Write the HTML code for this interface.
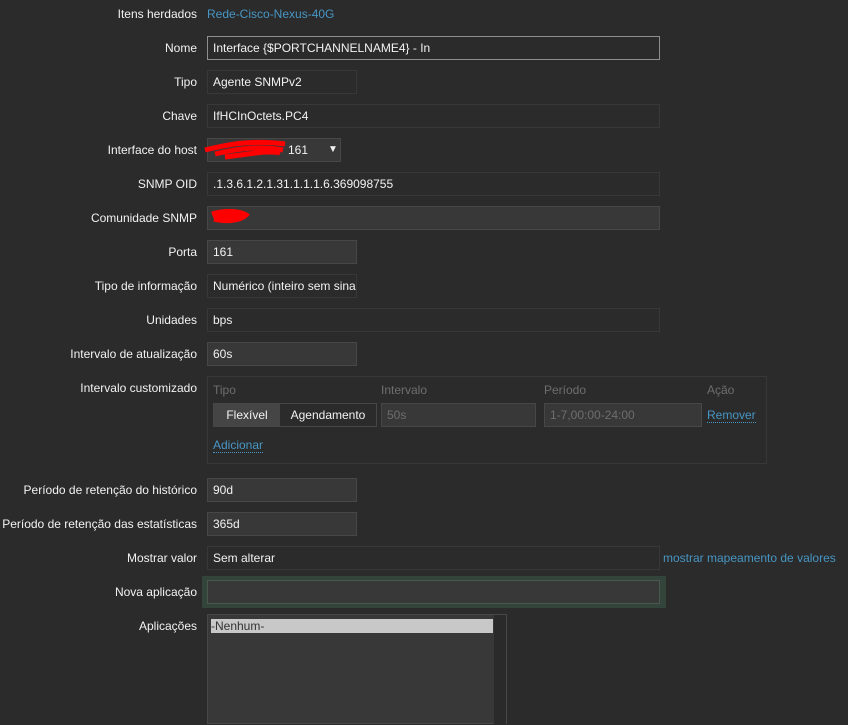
<!DOCTYPE html>
<html><head><meta charset="utf-8"><style>
body{margin:0;background:#2b2b2b;width:848px;height:717px;overflow:hidden;font-family:"Liberation Sans",Arial,sans-serif;font-size:12px;color:#f2f2f2;position:relative}
.l{position:absolute;right:651px;text-align:right;white-space:nowrap;line-height:14px}
.i{position:absolute;box-sizing:border-box;height:24px;border:1px solid #383838;background:#2b2b2b;padding:0 5px;line-height:22px;white-space:nowrap;overflow:hidden}
.e{background:#383838;border-color:#474747}
.a{color:#4796c4}
</style></head><body>
<div class="l" style="top:7px">Itens herdados</div><div class="a" style="position:absolute;left:207px;top:7px">Rede-Cisco-Nexus-40G</div>
<div class="l" style="top:41px">Nome</div><div class="i" style="left:207px;top:36px;width:453px;border-color:#8e8e8e">Interface {$PORTCHANNELNAME4} - In</div>
<div class="l" style="top:75px">Tipo</div><div class="i" style="left:207px;top:70px;width:150px">Agente SNMPv2</div>
<div class="l" style="top:109px">Chave</div><div class="i" style="left:207px;top:104px;width:453px">IfHCInOctets.PC4</div>
<div class="l" style="top:143px">Interface do host</div><div class="i e" style="left:207px;top:138px;width:134px"><span style="margin-left:75px">161</span><span style="position:absolute;left:120px;font-size:10px">▼</span></div>
<div class="l" style="top:177px">SNMP OID</div><div class="i" style="left:207px;top:172px;width:453px">.1.3.6.1.2.1.31.1.1.1.6.369098755</div>
<div class="l" style="top:211px">Comunidade SNMP</div><div class="i e" style="left:207px;top:206px;width:453px"></div>
<div class="l" style="top:245px">Porta</div><div class="i e" style="left:207px;top:240px;width:150px">161</div>
<div class="l" style="top:279px">Tipo de informação</div><div class="i" style="left:207px;top:274px;width:150px">Numérico (inteiro sem sinal)</div>
<div class="l" style="top:313px">Unidades</div><div class="i" style="left:207px;top:308px;width:453px">bps</div>
<div class="l" style="top:347px">Intervalo de atualização</div><div class="i e" style="left:207px;top:342px;width:150px">60s</div>
<div class="l" style="top:381px">Intervalo customizado</div>
<div style="position:absolute;left:207px;top:376px;width:560px;height:88px;box-sizing:border-box;border:1px solid #383838"></div>
<div style="position:absolute;top:383px;left:213px;color:#6e6e6e">Tipo</div>
<div style="position:absolute;top:383px;left:381px;color:#6e6e6e">Intervalo</div>
<div style="position:absolute;top:383px;left:544px;color:#6e6e6e">Período</div>
<div style="position:absolute;top:383px;left:707px;color:#6e6e6e">Ação</div>
<div class="i" style="left:213px;top:403px;width:164px;padding:0;border-color:#474747"><span style="display:inline-block;width:66px;background:#454545;text-align:center">Flexível</span><span style="display:inline-block;width:96px;text-align:center">Agendamento</span></div>
<div class="i e" style="left:381px;top:403px;width:155px;color:#6e6e6e">50s</div>
<div class="i e" style="left:544px;top:403px;width:158px;color:#6e6e6e">1-7,00:00-24:00</div>
<div class="a" style="position:absolute;left:707px;top:408px;border-bottom:1px dotted #4796c4">Remover</div>
<div class="a" style="position:absolute;left:213px;top:438px;border-bottom:1px dotted #4796c4">Adicionar</div>
<div class="l" style="top:483px">Período de retenção do histórico</div><div class="i e" style="left:207px;top:478px;width:150px">90d</div>
<div class="l" style="top:517px">Período de retenção das estatísticas</div><div class="i e" style="left:207px;top:512px;width:150px">365d</div>
<div class="l" style="top:551px">Mostrar valor</div><div class="i" style="left:207px;top:546px;width:453px">Sem alterar</div>
<div class="a" style="position:absolute;left:663px;top:551px">mostrar mapeamento de valores</div>
<div class="l" style="top:585px">Nova aplicação</div>
<div style="position:absolute;left:202px;top:576px;width:464px;height:32px;background:#33443a"></div>
<div class="i e" style="left:207px;top:580px;width:453px;border-color:#46594c"></div>
<div class="l" style="top:619px">Aplicações</div>
<div style="position:absolute;left:207px;top:614px;width:300px;height:110px;box-sizing:border-box;border:1px solid #474747;background:#383838"></div>
<div style="position:absolute;left:494px;top:615px;width:12px;height:110px;background:#2a2a2a"></div>
<div style="position:absolute;left:211px;top:619px;width:282px;height:14px;background:#c8c8c8;color:#333;line-height:14px">-Nenhum-</div>
<svg style="position:absolute;left:0;top:0" width="848" height="717"><path d="M205 150 C230 144 250 140 285 144 M215 154 C240 148 260 146 283 150 M225 157 C250 154 270 150 280 153" stroke="#f00" stroke-width="5" fill="none"/><path d="M212 214 C225 210 240 211 246 215 C240 221 225 222 214 219" stroke="#f00" stroke-width="5" fill="#f00"/></svg>
</body></html>
